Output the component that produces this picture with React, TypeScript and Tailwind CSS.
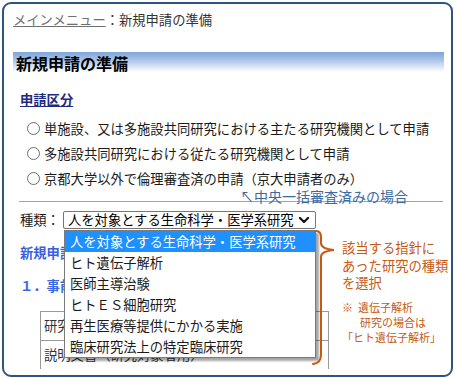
import React from "react";

const jp = { fontFamily: '"Noto Sans CJK JP", "Noto Sans", sans-serif' };

function Radio({ label }: { label: string }) {
  return (
    <div className="h-[25px] flex items-center pl-[14px]">
      <span className="w-[13px] h-[13px] rounded-full border border-[#6e6e6e] bg-white shrink-0" />
      <span className="ml-[4px] text-[13.3px] leading-[18px] text-[#1a1a1a] whitespace-nowrap">{label}</span>
    </div>
  );
}

const options = [
  "人を対象とする生命科学・医学系研究",
  "ヒト遺伝子解析",
  "医師主導治験",
  "ヒトＥＳ細胞研究",
  "再生医療等提供にかかる実施",
  "臨床研究法上の特定臨床研究",
];

export default function App() {
  return (
    <div className="w-[454px] h-[378px] bg-white" style={jp}>
      <div className="ml-[2px] mt-[2px] w-[451px] h-[375px] border-2 border-[#2b5583] rounded-[9px] relative overflow-hidden bg-white pl-[9px] pr-[7px]">
        {/* breadcrumb */}
        <div className="mt-[7px] text-[13.3px] leading-[18px] whitespace-nowrap">
          <span className="text-[#6f6f6f] underline">メインメニュー</span>
          <span className="text-[#333]">：新規申請の準備</span>
        </div>

        {/* heading bar */}
        <div className="mt-[23px] h-[20px] bg-[linear-gradient(to_bottom,#7fa5db_0%,#a9c3e8_40%,#ffffff_100%)] flex items-center pl-[3px]">
          <span className="text-[16px] leading-[20px] font-bold text-black pt-[2px]">新規申請の準備</span>
        </div>

        {/* section label */}
        <div className="mt-[19px] ml-[7px] text-[13.3px] leading-[18px] font-bold text-[#1f2b80] underline">申請区分</div>

        {/* radios */}
        <div className="mt-[7px]">
          <Radio label="単施設、又は多施設共同研究における主たる研究機関として申請" />
          <Radio label="多施設共同研究における従たる研究機関として申請" />
          <Radio label="京都大学以外で倫理審査済の申請（京大申請者のみ）" />
        </div>

        {/* divider */}
        <div className="mt-[10px] ml-[6px] mr-[1px] border-t border-[#a3a3a3]" />

        {/* kind select */}
        <div className="mt-[9px] ml-[7px] h-[18px] flex items-center">
          <span className="w-[43px] text-[13.3px] leading-[18px] text-[#1a1a1a] whitespace-nowrap">種類：</span>
          <div className="relative">
            <div className="w-[253px] h-[18px] border border-[#767676] rounded-[2px] bg-white flex items-center pl-[4px] pr-[6px]">
              <span className="flex-1 text-[13.3px] leading-[16px] text-black whitespace-nowrap">人を対象とする生命科学・医学系研究</span>
              <svg width="10" height="7" viewBox="0 0 10 7" className="shrink-0">
                <polyline points="1,1 5,5 9,1" fill="none" stroke="#111" strokeWidth="2.2" strokeLinecap="round" strokeLinejoin="round" />
              </svg>
            </div>
            {/* open dropdown list */}
            <div className="absolute left-[1px] top-[19px] w-[252px] z-20 bg-white border border-[#7a7a7a] shadow-[3px_3px_2px_rgba(0,0,0,0.35)]">
              {options.map((o, i) => (
                <div
                  key={o}
                  className={
                    i === 0
                      ? "h-[21px] flex items-center pl-[5px] bg-[#1e90ff] text-white text-[13.3px] leading-[18px] whitespace-nowrap"
                      : "h-[21px] flex items-center pl-[5px] text-[#1a1a1a] text-[13.3px] leading-[18px] whitespace-nowrap"
                  }
                >
                  {o}
                </div>
              ))}
            </div>
          </div>
        </div>

        {/* content behind dropdown */}
        <div className="mt-[15px] ml-[7px] text-[13.3px] leading-[18px] font-bold text-[#3a5fe0] whitespace-nowrap">新規申請書類の準備</div>
        <div className="mt-[15px] ml-[7px] text-[13.3px] leading-[18px] font-bold text-[#3a6ae2] whitespace-nowrap">１．事前確認</div>
        <div className="mt-[16px] ml-[27px] w-[289px] border-l border-r border-[#9a9a9a]">
          <div className="h-[29px] border-t border-[#9a9a9a] flex items-center pl-[3px] text-[13.3px] leading-[18px] text-[#333] whitespace-nowrap">研究計画書</div>
          <div className="h-[29px] border-t border-[#9a9a9a] flex items-center pl-[3px] text-[13.3px] leading-[18px] text-[#333] whitespace-nowrap">説明文書（研究対象者用）</div>
        </div>

        {/* blue annotation */}
        <div className="absolute left-[236px] top-[184px] text-[14px] leading-[17px] text-[#3a6aa3] whitespace-nowrap">↖中央一括審査済みの場合</div>

        {/* brace */}
        <svg className="absolute left-[301px] top-[221px] z-30" width="40" height="145" viewBox="0 0 40 145">
          <path
            d="M 11 6 Q 16 6 16 12 L 16 18 Q 16 24 29 25 Q 16 26 16 32 L 16 130 Q 16 138 8 139"
            fill="none"
            stroke="#c55a11"
            strokeWidth="2"
            strokeLinecap="round"
          />
        </svg>

        {/* orange annotation */}
        <div className="absolute left-[338px] top-[235px] text-[13.3px] leading-[17.5px] text-[#c55a11] whitespace-nowrap">
          <div>該当する指針に</div>
          <div>あった研究の種類</div>
          <div>を選択</div>
        </div>
        <div className="absolute left-[338px] top-[296px] text-[11px] leading-[15px] text-[#c55a11] whitespace-nowrap">
          <div>※&nbsp;&nbsp;遺伝子解析</div>
          <div className="pl-[18px]">研究の場合は</div>
          <div>「ヒト遺伝子解析」</div>
        </div>
      </div>
    </div>
  );
}
